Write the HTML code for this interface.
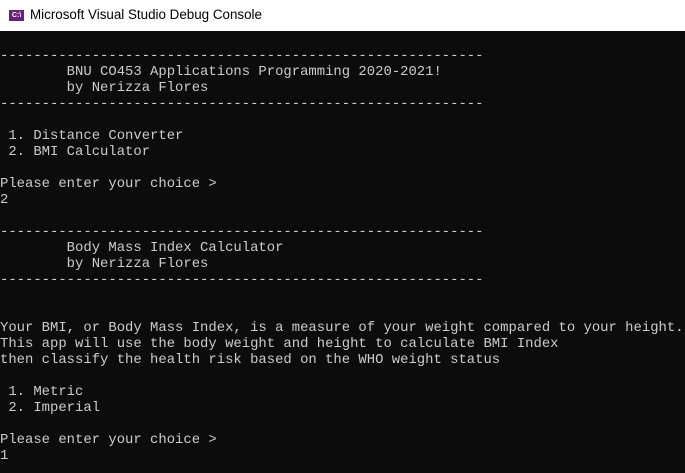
<!DOCTYPE html>
<html><head><style>
html,body{margin:0;padding:0;width:685px;height:473px;overflow:hidden;background:#0c0c0c}
.tb{position:absolute;left:0;top:0;width:685px;height:31px;background:#fff}
.tb span{position:absolute;left:30px;top:7px;font:13.4px "Liberation Sans",sans-serif;color:#000}
.ic{position:absolute;left:9px;top:10px;width:15px;height:11px;background:#68217a;color:#fff;font:bold 7px "Liberation Sans",sans-serif;line-height:11px;text-align:center}
pre{position:absolute;left:0;top:32px;margin:0;font:13.9px/16px "Liberation Mono",monospace;color:#cccccc;white-space:pre}
</style></head><body>
<div class="tb"><div class="ic">C:\</div><span>Microsoft Visual Studio Debug Console</span></div>
<pre>

----------------------------------------------------------
        BNU CO453 Applications Programming 2020-2021!
        by Nerizza Flores
----------------------------------------------------------

 1. Distance Converter
 2. BMI Calculator

Please enter your choice &gt;
2

----------------------------------------------------------
        Body Mass Index Calculator
        by Nerizza Flores
----------------------------------------------------------


Your BMI, or Body Mass Index, is a measure of your weight compared to your height.
This app will use the body weight and height to calculate BMI Index
then classify the health risk based on the WHO weight status

 1. Metric
 2. Imperial

Please enter your choice &gt;
1
</pre>
</body></html>
